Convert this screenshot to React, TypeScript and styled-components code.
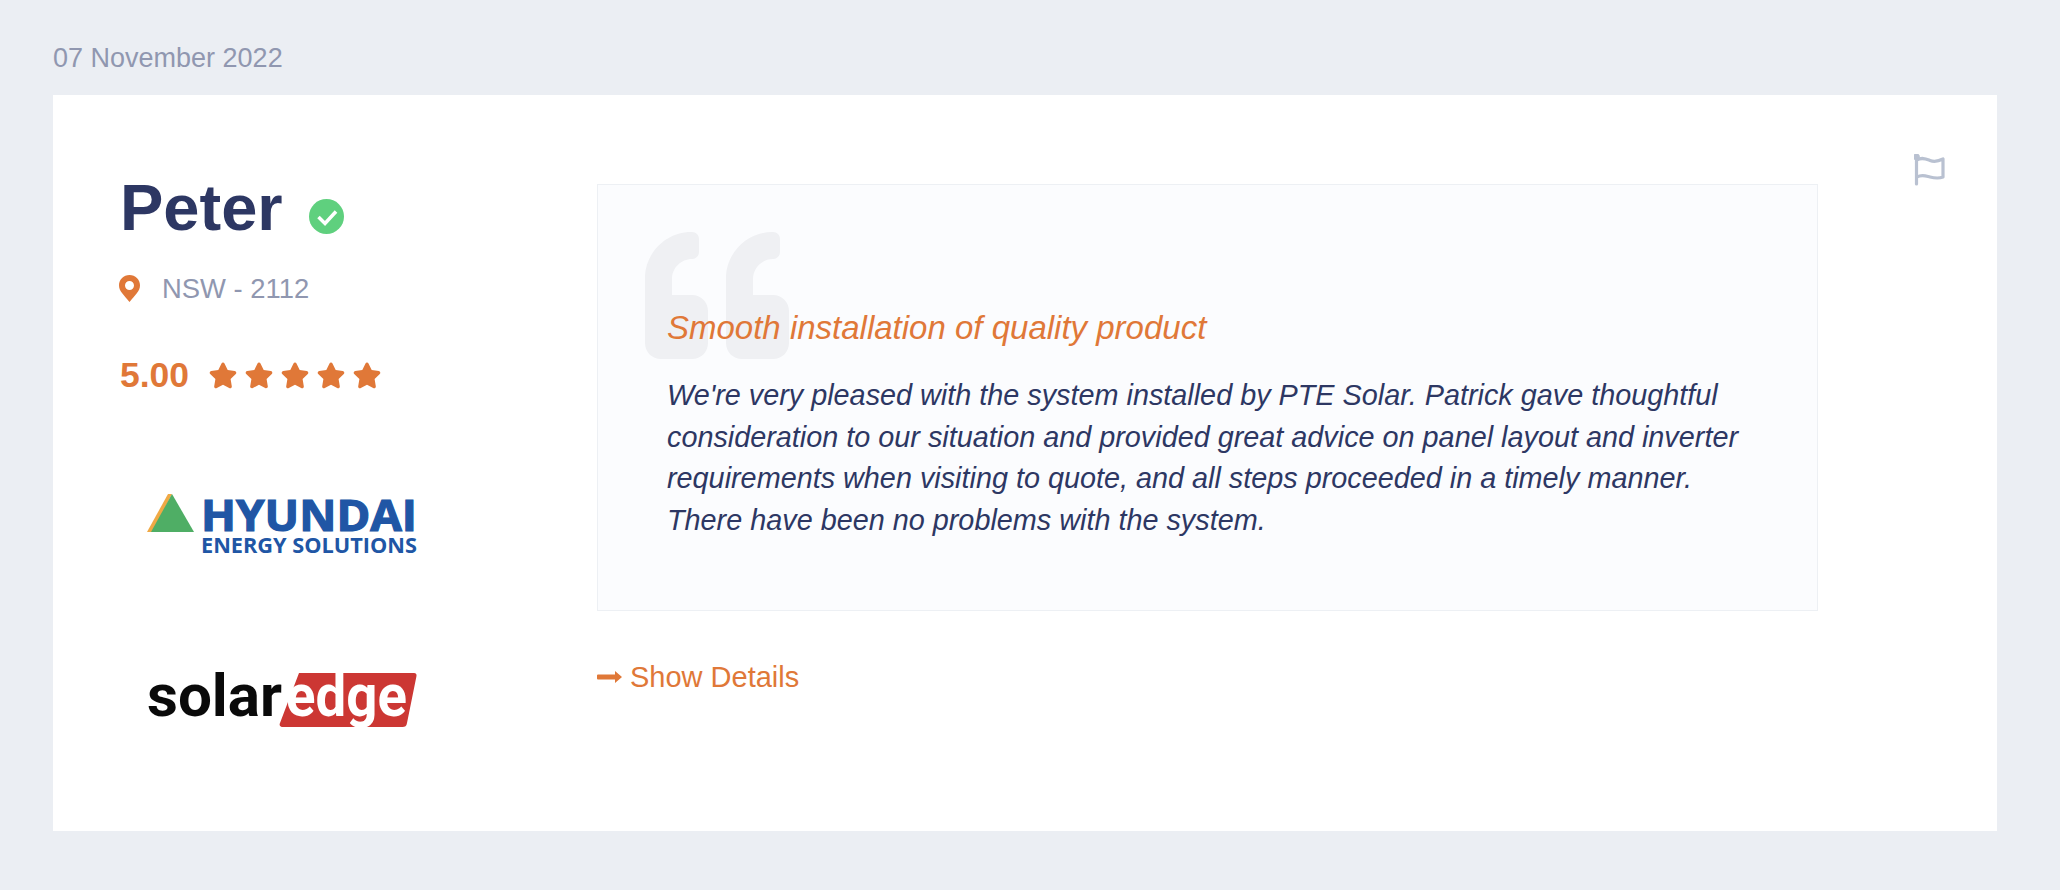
import React from "react";
import styled, { createGlobalStyle } from "styled-components";

const GlobalStyle = createGlobalStyle`
  html, body {
    margin: 0;
    padding: 0;
    background: #ebeef3;
    font-family: "Liberation Sans", Arial, sans-serif;
  }
`;

const Page = styled.div`
  width: 2060px;
  height: 890px;
  box-sizing: border-box;
  padding: 0 63px 0 53px;
  overflow: hidden;
`;

const DateLine = styled.div`
  height: 95px;
  box-sizing: border-box;
  padding-top: 42px;
  font-size: 27px;
  line-height: 32px;
  color: #9097b0;
`;

const Card = styled.div`
  height: 736px;
  background: #fff;
  display: flex;
`;

const Side = styled.div`
  width: 544px;
  flex: none;
  box-sizing: border-box;
  padding: 77px 0 0 67px;
  display: flex;
  flex-direction: column;
`;

const NameRow = styled.div`
  display: flex;
  align-items: center;
  gap: 26px;
  height: 72px;
`;

const Name = styled.h2`
  margin: 0;
  font-size: 65px;
  line-height: 72px;
  font-weight: 700;
  color: #2d3763;
`;

const Badge = styled.svg`
  width: 35px;
  height: 35px;
  margin-top: 16px;
`;

const LocationRow = styled.div`
  display: flex;
  align-items: center;
  gap: 22px;
  margin-top: 29px;
  margin-left: -1px;
  font-size: 27.4px;
  line-height: 32px;
  color: #9097b0;
`;

const Pin = styled.svg`
  width: 21px;
  height: 27px;
  margin-top: -2px;
`;

const RatingRow = styled.div`
  display: flex;
  align-items: center;
  gap: 20px;
  margin-top: 50px;
`;

const Score = styled.span`
  font-size: 35.5px;
  line-height: 40px;
  font-weight: 700;
  color: #e07838;
`;

const Stars = styled.div`
  display: flex;
  gap: 8px;
`;

const Star = styled.svg`
  width: 28px;
  height: 28px;
`;

const Logo = styled.svg<{ $top: number }>`
  display: block;
  width: 275px;
  margin-top: ${({ $top }) => $top}px;
  margin-left: 27px;
  overflow: visible;
`;

const Main = styled.div`
  width: 1221px;
  flex: none;
  padding-top: 89px;
`;

const QuoteBox = styled.div`
  position: relative;
  height: 427px;
  box-sizing: border-box;
  padding: 123px 60px 0 69px;
  background: #fbfcfe;
  border: 1px solid #edf0f4;
`;

const QuoteMark = styled.svg`
  position: absolute;
  left: 47px;
  top: 47px;
  width: 145px;
  height: 127px;
`;

const Headline = styled.h3`
  position: relative;
  margin: 0;
  font-size: 33px;
  line-height: 40px;
  font-weight: 400;
  font-style: italic;
  color: #e07838;
`;

const Body = styled.p`
  position: relative;
  margin: 27px 0 0;
  font-size: 28.8px;
  line-height: 41.5px;
  font-style: italic;
  color: #2d3763;
`;

const DetailsLink = styled.a`
  display: flex;
  align-items: center;
  gap: 8px;
  margin-top: 48px;
  font-size: 29px;
  line-height: 36px;
  color: #e07838;
`;

const Arrow = styled.svg`
  width: 25px;
  height: 16px;
`;

const FlagCol = styled.div`
  flex: 1;
  padding: 59px 0 0 96px;
`;

const Flag = styled.svg`
  width: 32px;
  height: 33px;
`;

const STAR =
  "M14 1.6c.7 0 1.2.4 1.5 1l3.2 6.5 7.1 1c1.5.2 2 2 1 3l-5.2 5 1.2 7.1c.3 1.5-1.3 2.6-2.6 1.9L14 23.7l-6.2 3.4c-1.3.7-2.9-.4-2.6-1.9l1.2-7.1-5.2-5c-1-1-.5-2.8 1-3l7.1-1 3.2-6.5c.3-.6.8-1 1.5-1z";

const QUOTE =
  "M46 0h1c4 0 7 3 7 7v13c0 4-3 7-7 7-11 0-20 9-20 20v16h20c9 0 16 7 16 16v32c0 9-7 16-16 16H16c-9 0-16-7-16-16V46C0 21 21 0 46 0z";

const App = () => {
  return (
    <Page>
      <GlobalStyle />
      <DateLine>07 November 2022</DateLine>
      <Card>
        <Side>
          <NameRow>
            <Name>Peter</Name>
            <Badge viewBox="0 0 35 35">
              <circle cx="17.5" cy="17.5" r="17.5" fill="#5fd07e" />
              <path d="M9.500 18l6.500 6.500L27 12.500" fill="none" stroke="#fff" strokeWidth="3.5" />
            </Badge>
          </NameRow>
          <LocationRow>
            <Pin viewBox="0 0 21 27">
              <path
                fillRule="evenodd"
                fill="#e07838"
                d="M10.5 0C4.7 0 0 4.6 0 10.3c0 3 1.2 5.4 3 7.8 2 2.7 4.7 5.7 7.5 8.9 2.8-3.2 5.500-6.2 7.500-8.900 1.800-2.400 3-4.800 3-7.800C21 4.600 16.300 0 10.500 0zm0 6a4.500 4.500 0 1 1 0 9 4.500 4.500 0 0 1 0-9z"
              />
            </Pin>
            NSW - 2112
          </LocationRow>
          <RatingRow>
            <Score>5.00</Score>
            <Stars>
              {[0, 1, 2, 3, 4].map((i) => (
                <Star key={i} viewBox="0 0 28 28">
                  <path d={STAR} fill="#e07838" />
                </Star>
              ))}
            </Stars>
          </RatingRow>
          <Logo $top={99} height="60" viewBox="0 0 275 60">
            <polygon points="0,38 21,0 25,0 6,38" fill="#f0a945" />
            <polygon points="4,38 25,0 47,38" fill="#4fae65" />
            <text x="54" y="37" fontFamily="'Open Sans', sans-serif" fontWeight="700" fontSize="43" fill="#2056a5" stroke="#2056a5" strokeWidth="1.2" textLength="216" lengthAdjust="spacingAndGlyphs">HYUNDAI</text>
            <text x="54" y="59" fontFamily="'Open Sans', sans-serif" fontWeight="700" fontSize="21" fill="#2056a5" textLength="216" lengthAdjust="spacingAndGlyphs">ENERGY SOLUTIONS</text>
          </Logo>
          <Logo $top={119} height="56" viewBox="0 0 275 56">
            <path d="M152 0h115c2 0 3 1.500 2.400 3.500L260 50c-.5 3-2 4-4.500 4H136c-3 0-4-2-3-4z" fill="#cc3733" />
            <text x="0" y="43" fontFamily="Roboto, sans-serif" fontWeight="700" fontSize="60" fill="#0a0a0a" textLength="135" lengthAdjust="spacingAndGlyphs">solar</text>
            <text x="139" y="43" fontFamily="Roboto, sans-serif" fontWeight="700" fontSize="60" fill="#fff" textLength="121" lengthAdjust="spacingAndGlyphs">edge</text>
          </Logo>
        </Side>
        <Main>
          <QuoteBox>
            <QuoteMark viewBox="0 0 145 127">
              <path fill="#eff0f3" d={QUOTE} />
              <path fill="#eff0f3" transform="translate(81 0)" d={QUOTE} />
            </QuoteMark>
            <Headline>Smooth installation of quality product</Headline>
            <Body>
              We're very pleased with the system installed by PTE Solar. Patrick gave thoughtful consideration to our
              situation and provided great advice on panel layout and inverter requirements when visiting to quote,
              and all steps proceeded in a timely manner. There have been no problems with the system.
            </Body>
          </QuoteBox>
          <DetailsLink>
            <Arrow viewBox="0 0 25 16">
              <path d="M1 5.500h17V2l7 6-7 6v-3.500H1a1 1 0 0 1-1-1v-3a1 1 0 0 1 1-1z" fill="#e07838" />
            </Arrow>
            Show Details
          </DetailsLink>
        </Main>
        <FlagCol>
          <Flag viewBox="0 0 32 33" fill="none" stroke="#b9c1d1" strokeWidth="3.2">
            <path d="M2.500 4v26" strokeLinecap="round" />
            <circle cx="2.500" cy="3" r="1.800" fill="#b9c1d1" />
            <path d="M3 6C8 3 12 5 16 6.500S25 7 29 5v18c-5 2-9 1-13 0s-8-3-13 0" strokeLinejoin="round" />
          </Flag>
        </FlagCol>
      </Card>
    </Page>
  );
};

export default App;
